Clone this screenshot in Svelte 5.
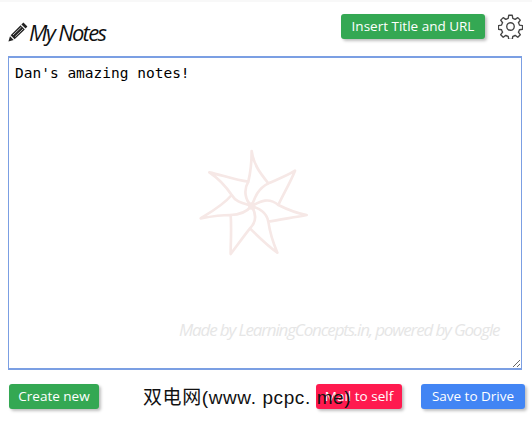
<script>
  let note = $state("Dan's amazing notes!");
</script>

<div class="page">
  <header class="top">
    <h1 class="title">
      <svg class="pencil" viewBox="0 0 20 20" aria-hidden="true">
        <path d="M15.4 0.6 L19.4 4.6 L17.6 6.6 L13.4 2.4 Z" fill="#222" />
        <path d="M12.6 3.2 L16.8 7.4 L6.6 17.2 L2.6 13.2 Z" fill="#222" />
        <path d="M2 14.2 L5.7 17.9 L0.4 19.6 Z" fill="#222" />
        <path d="M5 13 L13.4 5 M7.2 14.6 L15 7" stroke="#fff" stroke-width="0.7" fill="none" />
      </svg>
      <span>My Notes</span>
    </h1>
    <div class="tools">
      <button class="btn green insert">Insert Title and URL</button>
      <svg class="gear" viewBox="0 0 24 24" aria-hidden="true">
        <circle cx="12" cy="12" r="3.6" />
        <path d="M10.3 1.2 h3.4 l.5 3 a8 8 0 0 1 2.3 1 l2.5 -1.7 l2.4 2.4 l-1.8 2.5 a8 8 0 0 1 1 2.3 l3 .5 v3.4 l-3 .5 a8 8 0 0 1 -1 2.3 l1.8 2.5 l-2.4 2.4 l-2.5 -1.8 a8 8 0 0 1 -2.3 1 l-.5 3 h-3.4 l-.5 -3 a8 8 0 0 1 -2.3 -1 l-2.5 1.8 l-2.4 -2.4 l1.8 -2.5 a8 8 0 0 1 -1 -2.3 l-3 -.5 v-3.4 l3 -.5 a8 8 0 0 1 1 -2.3 l-1.8 -2.5 l2.4 -2.4 l2.5 1.7 a8 8 0 0 1 2.3 -1 z" />
      </svg>
    </div>
  </header>

  <div class="editor">
    <textarea bind:value={note} spellcheck="false"></textarea>
    <svg class="star" viewBox="0 0 390 375" aria-hidden="true">
      <path d="M185 33 C190 75 215 105 235 130 C262 118 290 108 315 92 C300 130 278 165 265 195 C295 210 320 220 350 225 C315 232 270 238 235 245 C240 280 250 310 262 338 C230 315 205 290 180 265 C160 290 140 318 122 342 C122 305 125 265 122 225 C90 225 60 230 32 235 C65 215 100 195 125 165 C105 135 85 115 58 97 C95 105 135 120 175 125 C182 95 185 65 185 33 Z" />
      <path d="M175 125 C160 150 165 180 185 198 M235 130 C205 145 195 170 185 198 M265 195 C235 170 210 185 185 198 M235 245 C230 215 205 205 185 198 M180 265 C205 240 195 215 185 198 M122 225 C150 225 170 215 185 198 M125 165 C140 190 165 190 185 198" />
      <circle cx="185" cy="198" r="11" />
    </svg>
    <div class="credit">Made by LearningConcepts.in, powered by Google</div>
  </div>

  <footer class="bottom">
    <button class="btn green create">Create new</button>
    <button class="btn red mail">Mail to self</button>
    <button class="btn blue save">Save to Drive</button>
  </footer>

  <div class="site-mark">双电网(www. pcpc. me)</div>
</div>

<style>
  :global(body) {
    margin: 0;
    background: #fff;
  }
  .page {
    position: relative;
    width: 532px;
    height: 422px;
    box-sizing: border-box;
    padding: 14px 6px 0 8px;
    overflow: hidden;
    font-family: "Open Sans", "Liberation Sans", sans-serif;
    border-top: 2px solid #f8f8f8;
  }
  .top {
    display: flex;
    justify-content: space-between;
    align-items: flex-start;
    height: 40px;
  }
  .title {
    display: flex;
    align-items: center;
    margin: 6px 0 0;
    font-size: 22px;
    font-weight: 400;
    font-style: italic;
    letter-spacing: -1.7px;
    line-height: 20px;
    color: #111;
    font-family: "Open Sans", sans-serif;
  }
  .pencil {
    width: 20px;
    height: 20px;
    margin-right: 1px;
  }
  .tools {
    display: flex;
    align-items: flex-start;
    gap: 13px;
    margin-top: -2px;
    margin-right: 3px;
  }
  .gear {
    width: 25px;
    height: 25px;
    fill: none;
    stroke: #444;
    stroke-width: 1.3;
    stroke-linejoin: round;
  }
  .btn {
    height: 25px;
    padding: 0;
    border: 0;
    border-radius: 3px;
    color: #fff;
    font-family: "Open Sans", sans-serif;
    font-size: 13.5px;
    line-height: 25px;
    box-shadow: 2px 2px 3px rgba(0, 0, 0, 0.25);
  }
  .green { background: #34a853; }
  .red { background: #ff1a4f; }
  .blue { background: #4285f4; }
  .insert { width: 144px; }
  .create { width: 90px; margin-left: 1px; }
  .mail { width: 86px; margin-left: auto; }
  .save { width: 104px; margin-left: 19px; margin-right: 1px; }
  .editor {
    position: relative;
    width: 514px;
    height: 314px;
  }
  textarea {
    display: block;
    width: 100%;
    height: 100%;
    box-sizing: border-box;
    margin: 0;
    padding: 6px 6px;
    border: 1px solid #7b9fe3;
    border-width: 2px 1.5px 2px 1.5px;
    outline: 0;
    background: transparent;
    color: #000;
    font-family: "DejaVu Sans Mono", monospace;
    font-size: 14.5px;
    line-height: 18px;
  }
  .star {
    position: absolute;
    left: 182px;
    top: 84px;
    width: 130px;
    height: 125px;
    fill: none;
    stroke: #f6e8e6;
    stroke-width: 8;
    stroke-linejoin: round;
    pointer-events: none;
  }
  .star circle {
    fill: #f6e8e6;
    stroke: none;
  }
  .credit {
    position: absolute;
    left: 171px;
    top: 264px;
    font-size: 17px;
    font-style: italic;
    letter-spacing: -1.15px;
    line-height: 20px;
    white-space: nowrap;
    color: #e6e6e6;
    pointer-events: none;
  }
  .bottom {
    display: flex;
    align-items: flex-start;
    margin-top: 14px;
  }
  .site-mark {
    position: absolute;
    left: 143px;
    top: 383px;
    font-family: "Liberation Sans", "Noto Sans CJK SC", sans-serif;
    font-size: 19px;
    line-height: 26px;
    letter-spacing: 0.6px;
    white-space: nowrap;
    color: #111;
    pointer-events: none;
  }
</style>
